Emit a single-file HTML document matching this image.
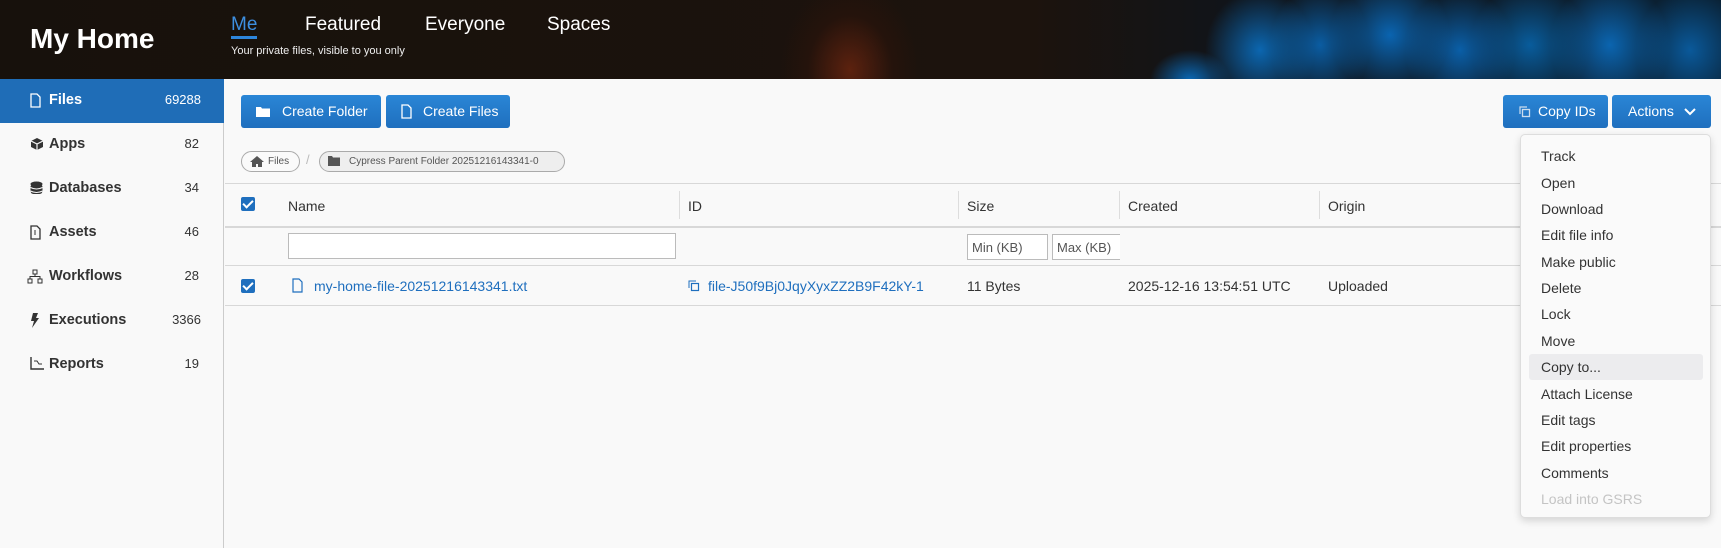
<!DOCTYPE html>
<html><head><meta charset="utf-8"><style>
*{box-sizing:border-box;margin:0;padding:0}
body{width:1721px;height:548px;overflow:hidden;background:#f9f9f9;font-family:"Liberation Sans",sans-serif;color:#333;position:relative}
.hdr{position:absolute;left:0;top:0;width:1721px;height:79px;background:
radial-gradient(ellipse 70px 90px at 850px 70px,rgba(120,40,15,.7),rgba(60,20,10,.3) 60%,transparent 100%),
radial-gradient(ellipse 40px 30px at 1190px 80px,#0a68b5,transparent),
radial-gradient(ellipse 55px 60px at 1260px 50px,rgba(11,111,192,.9),transparent),
radial-gradient(ellipse 50px 60px at 1320px 45px,rgba(10,100,176,.9),transparent),
radial-gradient(ellipse 60px 60px at 1390px 35px,rgba(10,108,191,.9),transparent),
radial-gradient(ellipse 55px 60px at 1460px 50px,rgba(10,102,181,.9),transparent),
radial-gradient(ellipse 60px 60px at 1530px 45px,rgba(8,99,168,.9),transparent),
radial-gradient(ellipse 60px 65px at 1610px 45px,rgba(11,108,189,.9),transparent),
radial-gradient(ellipse 55px 60px at 1690px 50px,rgba(10,95,165,.9),transparent),
linear-gradient(90deg,#17110c 0%,#1c130d 60%,#10141a 72%,#0a2236 100%)}
.abs{position:absolute;white-space:nowrap}
.side{position:absolute;left:0;top:79px;width:224px;height:469px;background:#f9f9f9;border-right:1px solid #ccc}
.si{position:absolute;left:0;width:224px;height:44px;font-weight:bold;font-size:14.5px;color:#333}
.si .l{position:absolute;left:49px;top:13px}
.si .c{position:absolute;right:25px;top:13px;font-weight:normal;font-size:13px}
.si svg{position:absolute;left:30px;top:14px}
.btn{position:absolute;height:33px;background:linear-gradient(#2a86d6,#1f6fbe);border-radius:3px;color:#fff;font-size:14px}
.btn span{position:absolute;top:8px}
.line{position:absolute;left:225px;width:1496px;height:1px;background:#d8d8d8}
.th{position:absolute;top:198px;font-size:14px;color:#333}
.vs{position:absolute;top:191px;width:1px;height:28px;background:#ddd}
.cb{position:absolute;left:241px;width:14px;height:14px;background:#1f6fbe;border-radius:2px}
.cb:after{content:"";position:absolute;left:4px;top:1px;width:4px;height:8px;border:solid #fff;border-width:0 2px 2px 0;transform:rotate(45deg)}
.inp{position:absolute;height:26px;border:1px solid #bbb;background:#fff;font-size:13px;color:#555;padding:5px 4px}
.menu{position:absolute;left:1520px;top:134px;width:191px;height:384px;background:#fafafa;border:1px solid #ddd;border-radius:5px;box-shadow:0 3px 8px rgba(0,0,0,.15)}
.mi{position:absolute;left:20px;font-size:14px;color:#333}
</style></head><body>
<div class="hdr"></div>
<div class="abs" style="left:30px;top:23px;font-size:28px;font-weight:bold;color:#fff">My Home</div>
<div class="abs" style="left:231px;top:14px;font-size:19px;color:#3d8fe0">Me</div>
<div class="abs" style="left:231px;top:36px;width:26px;height:3px;background:#2d86dc"></div>
<div class="abs" style="left:305px;top:14px;font-size:19px;color:#fff">Featured</div>
<div class="abs" style="left:425px;top:14px;font-size:19px;color:#fff">Everyone</div>
<div class="abs" style="left:547px;top:14px;font-size:19px;color:#fff">Spaces</div>
<div class="abs" style="left:231px;top:45px;font-size:11px;color:#eee">Your private files, visible to you only</div>

<div class="side">
<div class="si" style="top:0;background:#1f6db7;color:#fff"><svg width="11" height="15" viewBox="0 0 11 15"><path d="M1 1h6l3 3v10H1z" fill="none" stroke="#fff" stroke-width="1.3"/></svg><span class="l">Files</span><span class="c" style="right:23px">69288</span></div>
<div class="si" style="top:44px"><svg width="14" height="14" viewBox="0 0 14 14"><path d="M7 1l6 3v6l-6 3-6-3V4z" fill="#333"/><path d="M1 4l6 3 6-3M7 7v6" stroke="#f9f9f9" stroke-width="1.2" fill="none"/></svg><span class="l">Apps</span><span class="c">82</span></div>
<div class="si" style="top:88px"><svg width="13" height="15" viewBox="0 0 13 15"><ellipse cx="6.5" cy="3" rx="6" ry="2.5" fill="#333"/><rect x=".5" y="3" width="12" height="10" rx="3" fill="#333"/><path d="M.5 6.5q6 3 12 0M.5 10q6 3 12 0" stroke="#f9f9f9" fill="none"/></svg><span class="l">Databases</span><span class="c">34</span></div>
<div class="si" style="top:132px"><svg width="11" height="15" viewBox="0 0 11 15"><path d="M1 1h6l3 3v10H1z" fill="none" stroke="#333" stroke-width="1.3"/><path d="M5 5v5" stroke="#333"/></svg><span class="l">Assets</span><span class="c">46</span></div>
<div class="si" style="top:176px"><svg style="left:27px" width="16" height="15" viewBox="0 0 16 15"><rect x="6" y="1" width="4" height="4" fill="none" stroke="#333"/><rect x="1" y="10" width="4" height="4" fill="none" stroke="#333"/><rect x="11" y="10" width="4" height="4" fill="none" stroke="#333"/><path d="M8 5v2.5M3 10V7.5h10V10" fill="none" stroke="#333"/></svg><span class="l">Workflows</span><span class="c">28</span></div>
<div class="si" style="top:220px"><svg width="10" height="15" viewBox="0 0 10 15"><path d="M3 0h5L6 5h3L2 15l2-7H1z" fill="#333"/></svg><span class="l">Executions</span><span class="c" style="right:23px">3366</span></div>
<div class="si" style="top:264px"><svg width="14" height="13" viewBox="0 0 14 13"><path d="M1 0v12h13" fill="none" stroke="#333" stroke-width="1.4"/><path d="M4 4h3l2 3h3" fill="none" stroke="#333"/></svg><span class="l">Reports</span><span class="c">19</span></div>
</div>

<div class="btn" style="left:241px;top:95px;width:140px"><svg style="position:absolute;left:15px;top:11px" width="14" height="11" viewBox="0 0 14 11"><path d="M0 1h5l1 1.5h8V11H0z" fill="#fff"/></svg><span style="left:41px">Create Folder</span></div>
<div class="btn" style="left:386px;top:95px;width:124px"><svg style="position:absolute;left:15px;top:9px" width="11" height="15" viewBox="0 0 11 15"><path d="M1 1h6l3 3v10H1z" fill="none" stroke="#fff" stroke-width="1.3"/></svg><span style="left:37px">Create Files</span></div>
<div class="btn" style="left:1503px;top:95px;width:105px"><svg style="position:absolute;left:16px;top:11px" width="12" height="12" viewBox="0 0 12 12"><rect x="3.5" y="3.5" width="7" height="7" fill="none" stroke="#cde" stroke-width="1.3"/><path d="M1 8V1h7" fill="none" stroke="#cde" stroke-width="1.2"/></svg><span style="left:35px">Copy IDs</span></div>
<div class="btn" style="left:1612px;top:95px;width:99px"><span style="left:16px">Actions</span><svg style="position:absolute;left:72px;top:13px" width="12" height="8" viewBox="0 0 12 8"><path d="M1 1l5 5 5-5" fill="none" stroke="#fff" stroke-width="2"/></svg></div>

<div class="abs" style="left:241px;top:151px;width:59px;height:21px;border:1px solid #aaa;border-radius:11px;font-size:10px;color:#555;padding:4px 0 0 26px;background:#fafafa">Files</div>
<svg class="abs" style="left:250px;top:156px" width="14" height="11" viewBox="0 0 14 11"><path d="M7 0L0 6h2v5h4V8h2v3h4V6h2z" fill="#555"/></svg>
<div class="abs" style="left:306px;top:152px;font-size:13px;color:#bbb">/</div>
<div class="abs" style="left:319px;top:151px;width:246px;height:21px;border:1px solid #aaa;border-radius:11px;font-size:10px;color:#555;padding:4px 0 0 29px;background:#eee">Cypress Parent Folder 20251216143341-0</div>
<svg class="abs" style="left:328px;top:156px" width="12" height="10" viewBox="0 0 12 10"><path d="M0 0h4l1 1.5h7V10H0z" fill="#555"/></svg>

<div class="line" style="top:183px"></div>
<div class="line" style="top:226px;height:2px"></div>
<div class="line" style="top:265px"></div>
<div class="line" style="top:305px"></div>
<div class="cb" style="top:197px"></div>
<div class="th" style="left:288px">Name</div>
<div class="vs" style="left:679px"></div><div class="th" style="left:688px">ID</div>
<div class="vs" style="left:958px"></div><div class="th" style="left:967px">Size</div>
<div class="vs" style="left:1119px"></div><div class="th" style="left:1128px">Created</div>
<div class="vs" style="left:1319px"></div><div class="th" style="left:1328px">Origin</div>
<div class="inp" style="left:288px;top:233px;width:388px"></div>
<div class="inp" style="left:967px;top:234px;width:81px">Min (KB)</div>
<div class="inp" style="left:1052px;top:234px;width:68px;border-right:none">Max (KB)</div>

<div class="cb" style="top:279px"></div>
<svg class="abs" style="left:292px;top:278px" width="11" height="15" viewBox="0 0 11 15"><path d="M1 1h6l3 3v10H1z" fill="none" stroke="#1f6fbe" stroke-width="1.2"/></svg>
<div class="abs" style="left:314px;top:278px;font-size:14px;color:#1f6fbe">my-home-file-20251216143341.txt</div>
<svg class="abs" style="left:688px;top:280px" width="12" height="12" viewBox="0 0 12 12"><rect x="3.5" y="3.5" width="7" height="7" fill="none" stroke="#1f6fbe" stroke-width="1.2"/><path d="M1 8V1h7" fill="none" stroke="#1f6fbe"/></svg>
<div class="abs" style="left:708px;top:278px;font-size:14px;color:#1f6fbe">file-J50f9Bj0JqyXyxZZ2B9F42kY-1</div>
<div class="abs" style="left:967px;top:278px;font-size:14px">11 Bytes</div>
<div class="abs" style="left:1128px;top:278px;font-size:14px">2025-12-16 13:54:51 UTC</div>
<div class="abs" style="left:1328px;top:278px;font-size:14px">Uploaded</div>

<div class="menu">
<div class="abs" style="left:8px;top:219px;width:174px;height:26px;background:#ececee;border-radius:3px"></div>
<div class="mi" style="top:13px">Track</div>
<div class="mi" style="top:40px">Open</div>
<div class="mi" style="top:66px">Download</div>
<div class="mi" style="top:92px">Edit file info</div>
<div class="mi" style="top:119px">Make public</div>
<div class="mi" style="top:145px">Delete</div>
<div class="mi" style="top:171px">Lock</div>
<div class="mi" style="top:198px">Move</div>
<div class="mi" style="top:224px">Copy to...</div>
<div class="mi" style="top:251px">Attach License</div>
<div class="mi" style="top:277px">Edit tags</div>
<div class="mi" style="top:303px">Edit properties</div>
<div class="mi" style="top:330px">Comments</div>
<div class="mi" style="top:356px;color:#c4c4c4">Load into GSRS</div>
</div>
</body></html>
